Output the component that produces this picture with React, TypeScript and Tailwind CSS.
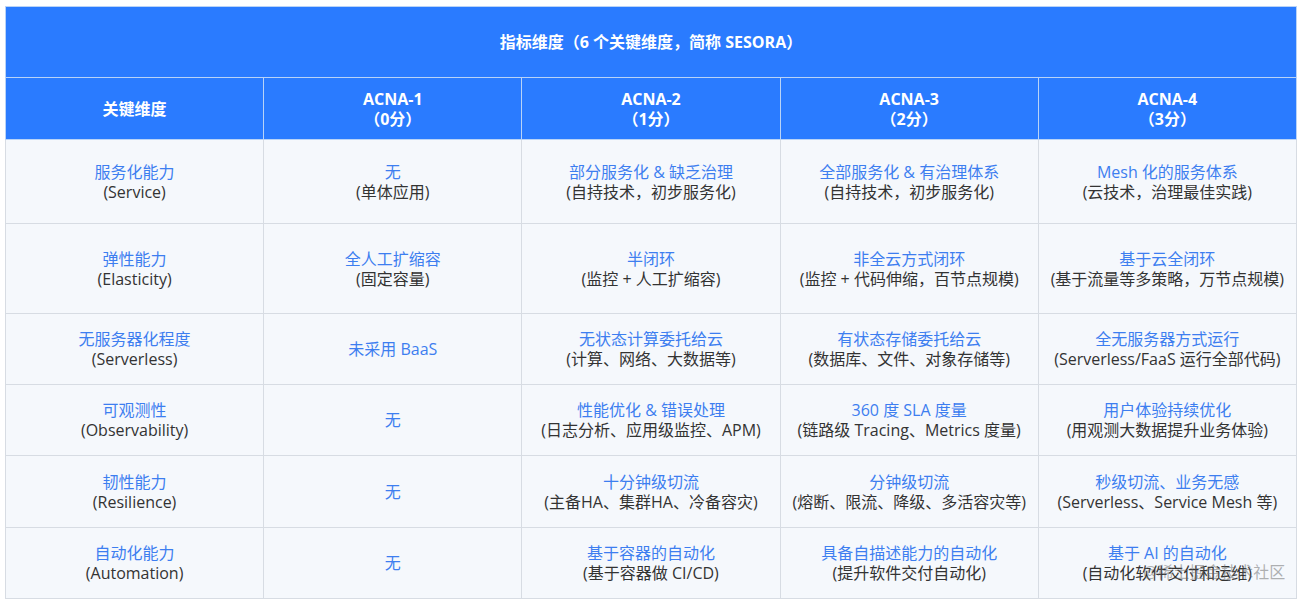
const headers = [
    { t: "ACNA-1", s: "（0分）" },
    { t: "ACNA-2", s: "（1分）" },
    { t: "ACNA-3", s: "（2分）" },
    { t: "ACNA-4", s: "（3分）" },
];

const rows: { h: string; cells: [string, string?][] }[] = [
    {
        h: "h-[84px]",
        cells: [
            ["服务化能力", "(Service)"],
            ["无", "(单体应用)"],
            ["部分服务化 & 缺乏治理", "(自持技术，初步服务化)"],
            ["全部服务化 & 有治理体系", "(自持技术，初步服务化)"],
            ["Mesh 化的服务体系", "(云技术，治理最佳实践)"],
        ],
    },
    {
        h: "h-[90px]",
        cells: [
            ["弹性能力", "(Elasticity)"],
            ["全人工扩缩容", "(固定容量)"],
            ["半闭环", "(监控 + 人工扩缩容)"],
            ["非全云方式闭环", "(监控 + 代码伸缩，百节点规模)"],
            ["基于云全闭环", "(基于流量等多策略，万节点规模)"],
        ],
    },
    {
        h: "h-[71px]",
        cells: [
            ["无服务器化程度", "(Serverless)"],
            ["未采用 BaaS"],
            ["无状态计算委托给云", "(计算、网络、大数据等)"],
            ["有状态存储委托给云", "(数据库、文件、对象存储等)"],
            ["全无服务器方式运行", "(Serverless/FaaS 运行全部代码)"],
        ],
    },
    {
        h: "h-[71px]",
        cells: [
            ["可观测性", "(Observability)"],
            ["无"],
            ["性能优化 & 错误处理", "(日志分析、应用级监控、APM)"],
            ["360 度 SLA 度量", "(链路级 Tracing、Metrics 度量)"],
            ["用户体验持续优化", "(用观测大数据提升业务体验)"],
        ],
    },
    {
        h: "h-[72px]",
        cells: [
            ["韧性能力", "(Resilience)"],
            ["无"],
            ["十分钟级切流", "(主备HA、集群HA、冷备容灾)"],
            ["分钟级切流", "(熔断、限流、降级、多活容灾等)"],
            ["秒级切流、业务无感", "(Serverless、Service Mesh 等)"],
        ],
    },
    {
        h: "h-[71px]",
        cells: [
            ["自动化能力", "(Automation)"],
            ["无"],
            ["基于容器的自动化", "(基于容器做 CI/CD)"],
            ["具备自描述能力的自动化", "(提升软件交付自动化)"],
            ["基于 AI 的自动化", "(自动化软件交付和运维)"],
        ],
    },
];

export default function App() {
    return (
        <div
            className="w-[1303px] h-[601px] bg-white pt-[6px] pl-[5px] relative overflow-hidden"
            style={{ fontFamily: '"Open Sans", "Noto Sans CJK SC", sans-serif' }}
        >
            <table className="w-[1292px] border-collapse table-fixed text-center">
                <thead>
                    <tr className="h-[71px] bg-[#2a7bff]">
                        <th colSpan={5} className="text-white text-[16px] font-bold border border-[#b9d3f7]">
                            指标维度（6 个关键维度，简称 SESORA）
                        </th>
                    </tr>
                    <tr className="h-[62px] bg-[#2a7bff]">
                        <th className="text-white text-[16px] font-bold border border-[#b9d3f7]">关键维度</th>
                        {headers.map((hd) => (
                            <th key={hd.t} className="text-white text-[16px] font-bold leading-[20px] border border-[#b9d3f7]">
                                <div>{hd.t}</div>
                                <div>{hd.s}</div>
                            </th>
                        ))}
                    </tr>
                </thead>
                <tbody>
                    {rows.map((r, i) => (
                        <tr key={i} className={`${r.h} bg-[#f5f8fc]`}>
                            {r.cells.map(([a, b], j) => (
                                <td key={j} className="border border-[#d7dce3] text-[16px] leading-[20px] px-1">
                                    <div className="text-[#3d7ef0]">{a}</div>
                                    {b && <div className="text-[#333]">{b}</div>}
                                </td>
                            ))}
                        </tr>
                    ))}
                </tbody>
            </table>
            <div className="absolute left-[1143px] top-[562px] text-[16px] leading-[20px] text-[#666]/50">
                @稀土掘金技术社区
            </div>
        </div>
    );
}
